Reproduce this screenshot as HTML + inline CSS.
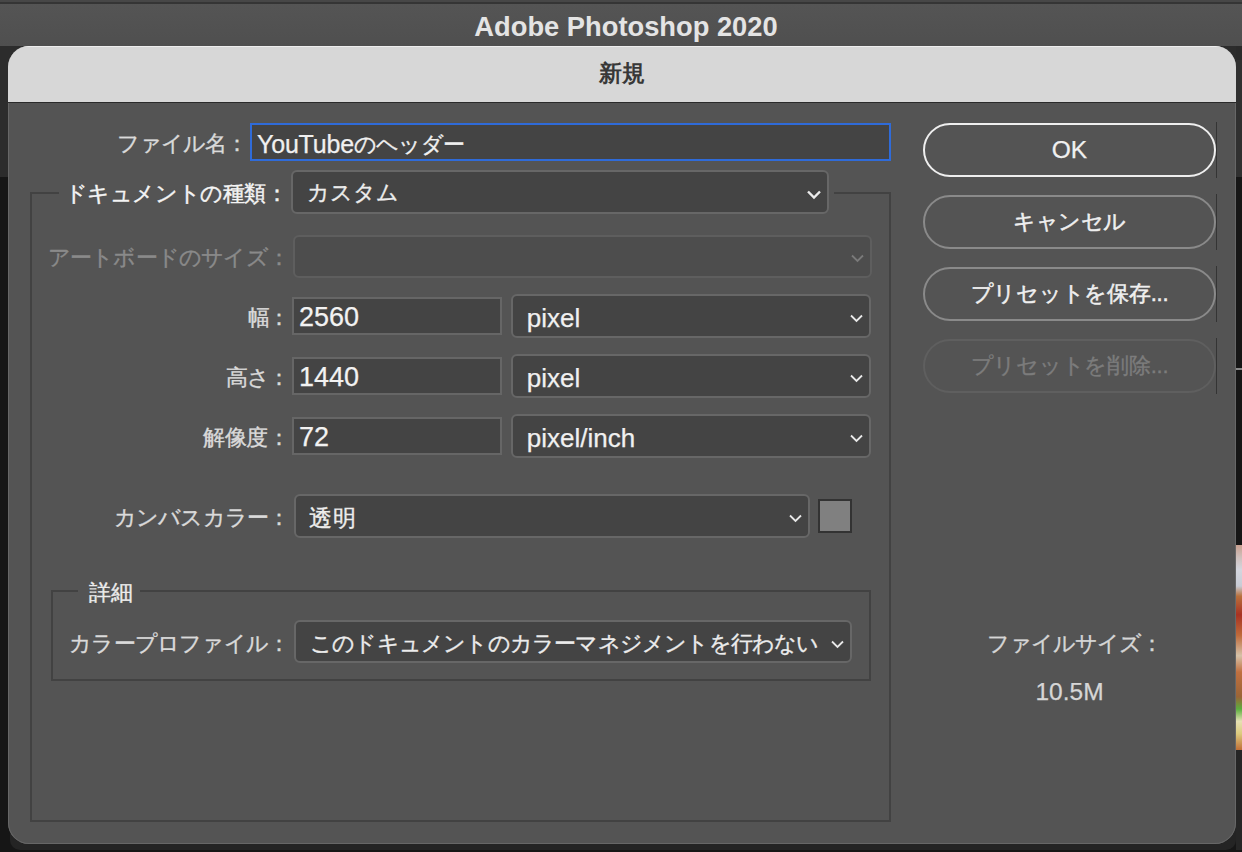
<!DOCTYPE html>
<html lang="ja">
<head>
<meta charset="utf-8">
<style>
html,body{margin:0;padding:0;}
body{width:1242px;height:852px;position:relative;overflow:hidden;background:#161616;font-family:"Liberation Sans",sans-serif;}
.a{position:absolute;}
.t{position:absolute;white-space:nowrap;line-height:1;}
.j{font-size:22px;-webkit-text-stroke:0.35px currentColor;}
.l{font-size:26px;-webkit-text-stroke:0.25px currentColor;}
.lab{color:#dadada;}
.box{position:absolute;box-sizing:border-box;}
.inp{border:2px solid #666;background:#444;}
.sel{border:2px solid #676767;background:#444;border-radius:6px;}
.gl{position:absolute;background:#424242;}
.btn{position:absolute;box-sizing:border-box;left:923px;width:293px;height:54px;border-radius:27px;border:2px solid #8a8a8a;}
.sep{position:absolute;left:1216px;width:1px;background:#343434;}
svg.chev{position:absolute;overflow:visible;}
</style>
</head>
<body>
<!-- app title bar -->
<div class="a" style="left:0;top:0;width:1242px;height:46px;background:linear-gradient(#555 0,#4f4f4f 100%);"></div>
<div class="a" style="left:0;top:0;width:1242px;height:2px;background:#474747;"></div>
<div class="a" style="left:0;top:2px;width:1242px;height:2px;background:#353535;"></div>
<div class="t" style="left:0;width:1252px;top:12.5px;text-align:center;font-weight:bold;font-size:27.3px;color:#e4e4e4;">Adobe Photoshop 2020</div>
<!-- background strips -->
<div class="a" style="left:0;top:46px;width:1242px;height:131px;background:#2c2c2c;"></div>
<div class="a" style="left:1236px;top:368px;width:6px;height:2px;background:#8a8a8a;"></div>
<div class="a" style="left:1236px;top:545px;width:6px;height:205px;background:linear-gradient(#c9a090 0,#cfc0bc 6%,#d4d6de 12%,#c8ccd6 20%,#b8703c 25%,#a83222 34%,#bf6a3a 44%,#d6c2a8 54%,#c07040 62%,#9a6436 74%,#5cae3e 80%,#e6e0b4 86%,#dccb7e 92%,#bf6e36 100%);"></div>
<!-- dialog -->
<div class="a" style="left:10px;top:60px;width:1226px;height:790px;border-radius:10px;background:#242424;"></div>
<div class="a" style="left:1236px;top:750px;width:6px;height:100px;background:#262626;"></div>
<div class="a" style="left:1236px;top:46px;width:6px;height:14px;background:#2a2a2a;"></div>
<div class="a" style="left:1236px;top:60px;width:6px;height:117px;background:#303030;"></div>
<div class="a" style="left:8px;top:46px;width:1228px;height:798px;border-radius:21px;background:#545454;overflow:hidden;box-shadow:inset 0 0 0 1px #676767;">
  <div class="a" style="left:0;top:0;width:1228px;height:56px;background:#d7d7d7;box-shadow:inset 0 1px 0 #ededed;border-bottom:1.5px solid #2a2a2a;"></div>
</div>
<div class="t" style="left:0;width:1244px;top:62px;text-align:center;font-weight:bold;font-size:23px;color:#383838;">新規</div>

<!-- file name -->
<div class="t j lab" style="right:995px;top:133px;letter-spacing:-1px;">ファイル名：</div>
<div class="box" style="left:250px;top:123px;width:641px;height:38px;border:2px solid #2f6bd9;background:#444;"></div>
<div class="t" style="left:257px;top:131px;color:#f0f0f0;"><span class="l" style="font-size:25px;letter-spacing:-0.2px;position:relative;top:0.5px">YouTube</span><span class="j" style="font-size:22px;letter-spacing:-0.7px">のヘッダー</span></div>

<!-- group 1 -->
<div class="gl" style="left:30px;top:192px;width:29px;height:2px;"></div>
<div class="gl" style="left:834px;top:192px;width:57px;height:2px;"></div>
<div class="gl" style="left:30px;top:192px;width:2px;height:630px;"></div>
<div class="gl" style="left:889px;top:192px;width:2px;height:630px;"></div>
<div class="gl" style="left:30px;top:820px;width:861px;height:2px;"></div>

<div class="t j" style="-webkit-text-stroke:0.42px currentColor;right:954.4px;top:183px;color:#f4f4f4;letter-spacing:-0.4px;">ドキュメントの種類：</div>
<div class="box sel" style="left:291px;top:170px;width:538px;height:44px;"></div>
<div class="t j" style="left:306.5px;top:182px;color:#ececec;">カスタム</div>

<div class="t j" style="right:952.8px;top:247px;color:#8a8a8a;letter-spacing:-0.76px;">アートボードのサイズ：</div>
<div class="box sel" style="left:293px;top:235px;width:579px;height:42.5px;border-color:#5e5e5e;background:#4d4d4d;"></div>

<div class="t j lab" style="right:953.6px;top:307px;letter-spacing:-1.6px;">幅：</div>
<div class="box inp" style="left:292px;top:297px;width:210px;height:38px;"></div>
<div class="t l" style="left:299px;top:304px;color:#f2f2f2;font-size:27px;">2560</div>
<div class="box sel" style="left:511px;top:294px;width:360px;height:44px;"></div>
<div class="t l" style="left:526.8px;top:304.6px;color:#f0f0f0;">pixel</div>

<div class="t j lab" style="right:953.6px;top:367px;letter-spacing:-1.65px;">高さ：</div>
<div class="box inp" style="left:292px;top:357px;width:210px;height:38px;"></div>
<div class="t l" style="left:299px;top:364px;color:#f2f2f2;font-size:27px;">1440</div>
<div class="box sel" style="left:511px;top:354px;width:360px;height:44px;"></div>
<div class="t l" style="left:526.8px;top:364.6px;color:#f0f0f0;">pixel</div>

<div class="t j lab" style="right:952.4px;top:427px;letter-spacing:-0.43px;">解像度：</div>
<div class="box inp" style="left:292px;top:417px;width:210px;height:38px;"></div>
<div class="t l" style="left:299px;top:424px;color:#f2f2f2;font-size:27px;">72</div>
<div class="box sel" style="left:511px;top:414px;width:360px;height:44px;"></div>
<div class="t l" style="left:526.8px;top:424.6px;color:#f0f0f0;">pixel/inch</div>

<div class="t j lab" style="right:952.9px;top:507px;letter-spacing:-0.86px;">カンバスカラー：</div>
<div class="box sel" style="left:294px;top:494px;width:516px;height:44px;"></div>
<div class="t j" style="left:309px;top:506.5px;color:#ececec;font-size:23px;letter-spacing:0.8px;">透明</div>
<div class="box" style="left:818px;top:499px;width:34px;height:34px;border:2px solid #333;background:#808080;"></div>

<!-- group 2 -->
<div class="gl" style="left:51px;top:590px;width:27px;height:2px;"></div>
<div class="gl" style="left:140px;top:590px;width:731px;height:2px;"></div>
<div class="gl" style="left:51px;top:590px;width:2px;height:91px;"></div>
<div class="gl" style="left:869px;top:590px;width:2px;height:91px;"></div>
<div class="gl" style="left:51px;top:679px;width:820px;height:2px;"></div>
<div class="t j" style="left:89px;top:582px;color:#ececec;letter-spacing:0.3px;">詳細</div>

<div class="t j lab" style="right:952.8px;top:633px;letter-spacing:-0.79px;">カラープロファイル：</div>
<div class="box sel" style="left:294px;top:620px;width:558px;height:43px;"></div>
<div class="t j" style="left:310px;top:633px;color:#ececec;letter-spacing:-0.8px;">このドキュメントのカラーマネジメントを行わない</div>

<!-- chevrons -->
<svg class="chev" style="left:807px;top:190px" width="14" height="9"><path d="M1 1.5 L7 7.5 L13 1.5" fill="none" stroke="#ececec" stroke-width="2.4"/></svg>
<svg class="chev" style="left:851px;top:254px" width="14" height="9"><path d="M1 1.5 L6.5 7 L12 1.5" fill="none" stroke="#7a7a7a" stroke-width="1.8"/></svg>
<svg class="chev" style="left:850px;top:314px" width="14" height="9"><path d="M1 1.5 L6.5 7 L12 1.5" fill="none" stroke="#e8e8e8" stroke-width="1.8"/></svg>
<svg class="chev" style="left:850px;top:374px" width="14" height="9"><path d="M1 1.5 L6.5 7 L12 1.5" fill="none" stroke="#e8e8e8" stroke-width="1.8"/></svg>
<svg class="chev" style="left:850px;top:434px" width="14" height="9"><path d="M1 1.5 L6.5 7 L12 1.5" fill="none" stroke="#e8e8e8" stroke-width="1.8"/></svg>
<svg class="chev" style="left:789px;top:514px" width="14" height="9"><path d="M1 1.5 L6.5 7 L12 1.5" fill="none" stroke="#e8e8e8" stroke-width="1.8"/></svg>
<svg class="chev" style="left:831px;top:640px" width="14" height="9"><path d="M1 1.5 L6.5 7 L12 1.5" fill="none" stroke="#e8e8e8" stroke-width="1.8"/></svg>

<!-- right column -->
<div class="btn" style="top:123px;border-color:#efefef;"></div>
<div class="t l" style="left:923px;width:293px;top:138px;text-align:center;color:#f0f0f0;font-size:24.5px;">OK</div>
<div class="sep" style="top:122px;height:56px;"></div>

<div class="btn" style="top:195px;"></div>
<div class="t j" style="-webkit-text-stroke:0.5px currentColor;left:923px;width:293px;top:211px;text-align:center;color:#efefef;letter-spacing:-0.5px;text-indent:-0.5px;">キャンセル</div>
<div class="sep" style="top:194px;height:56px;"></div>

<div class="btn" style="top:267px;"></div>
<div class="t j" style="-webkit-text-stroke:0.5px currentColor;left:923px;width:293px;top:283px;text-align:center;color:#efefef;letter-spacing:-0.25px;">プリセットを保存...</div>
<div class="sep" style="top:266px;height:56px;"></div>

<div class="btn" style="top:339px;border-color:#5f5f5f;"></div>
<div class="t j" style="left:923px;width:293px;top:355px;text-align:center;color:#7c7c7c;letter-spacing:-0.25px;">プリセットを削除...</div>
<div class="sep" style="top:338px;height:56px;"></div>

<div class="t j" style="left:987px;top:633px;color:#d6d6d6;letter-spacing:-0.96px;">ファイルサイズ：</div>
<div class="t l" style="left:923px;width:293px;top:680px;text-align:center;color:#d6d6d6;font-size:24.5px;">10.5M</div>
</body>
</html>
